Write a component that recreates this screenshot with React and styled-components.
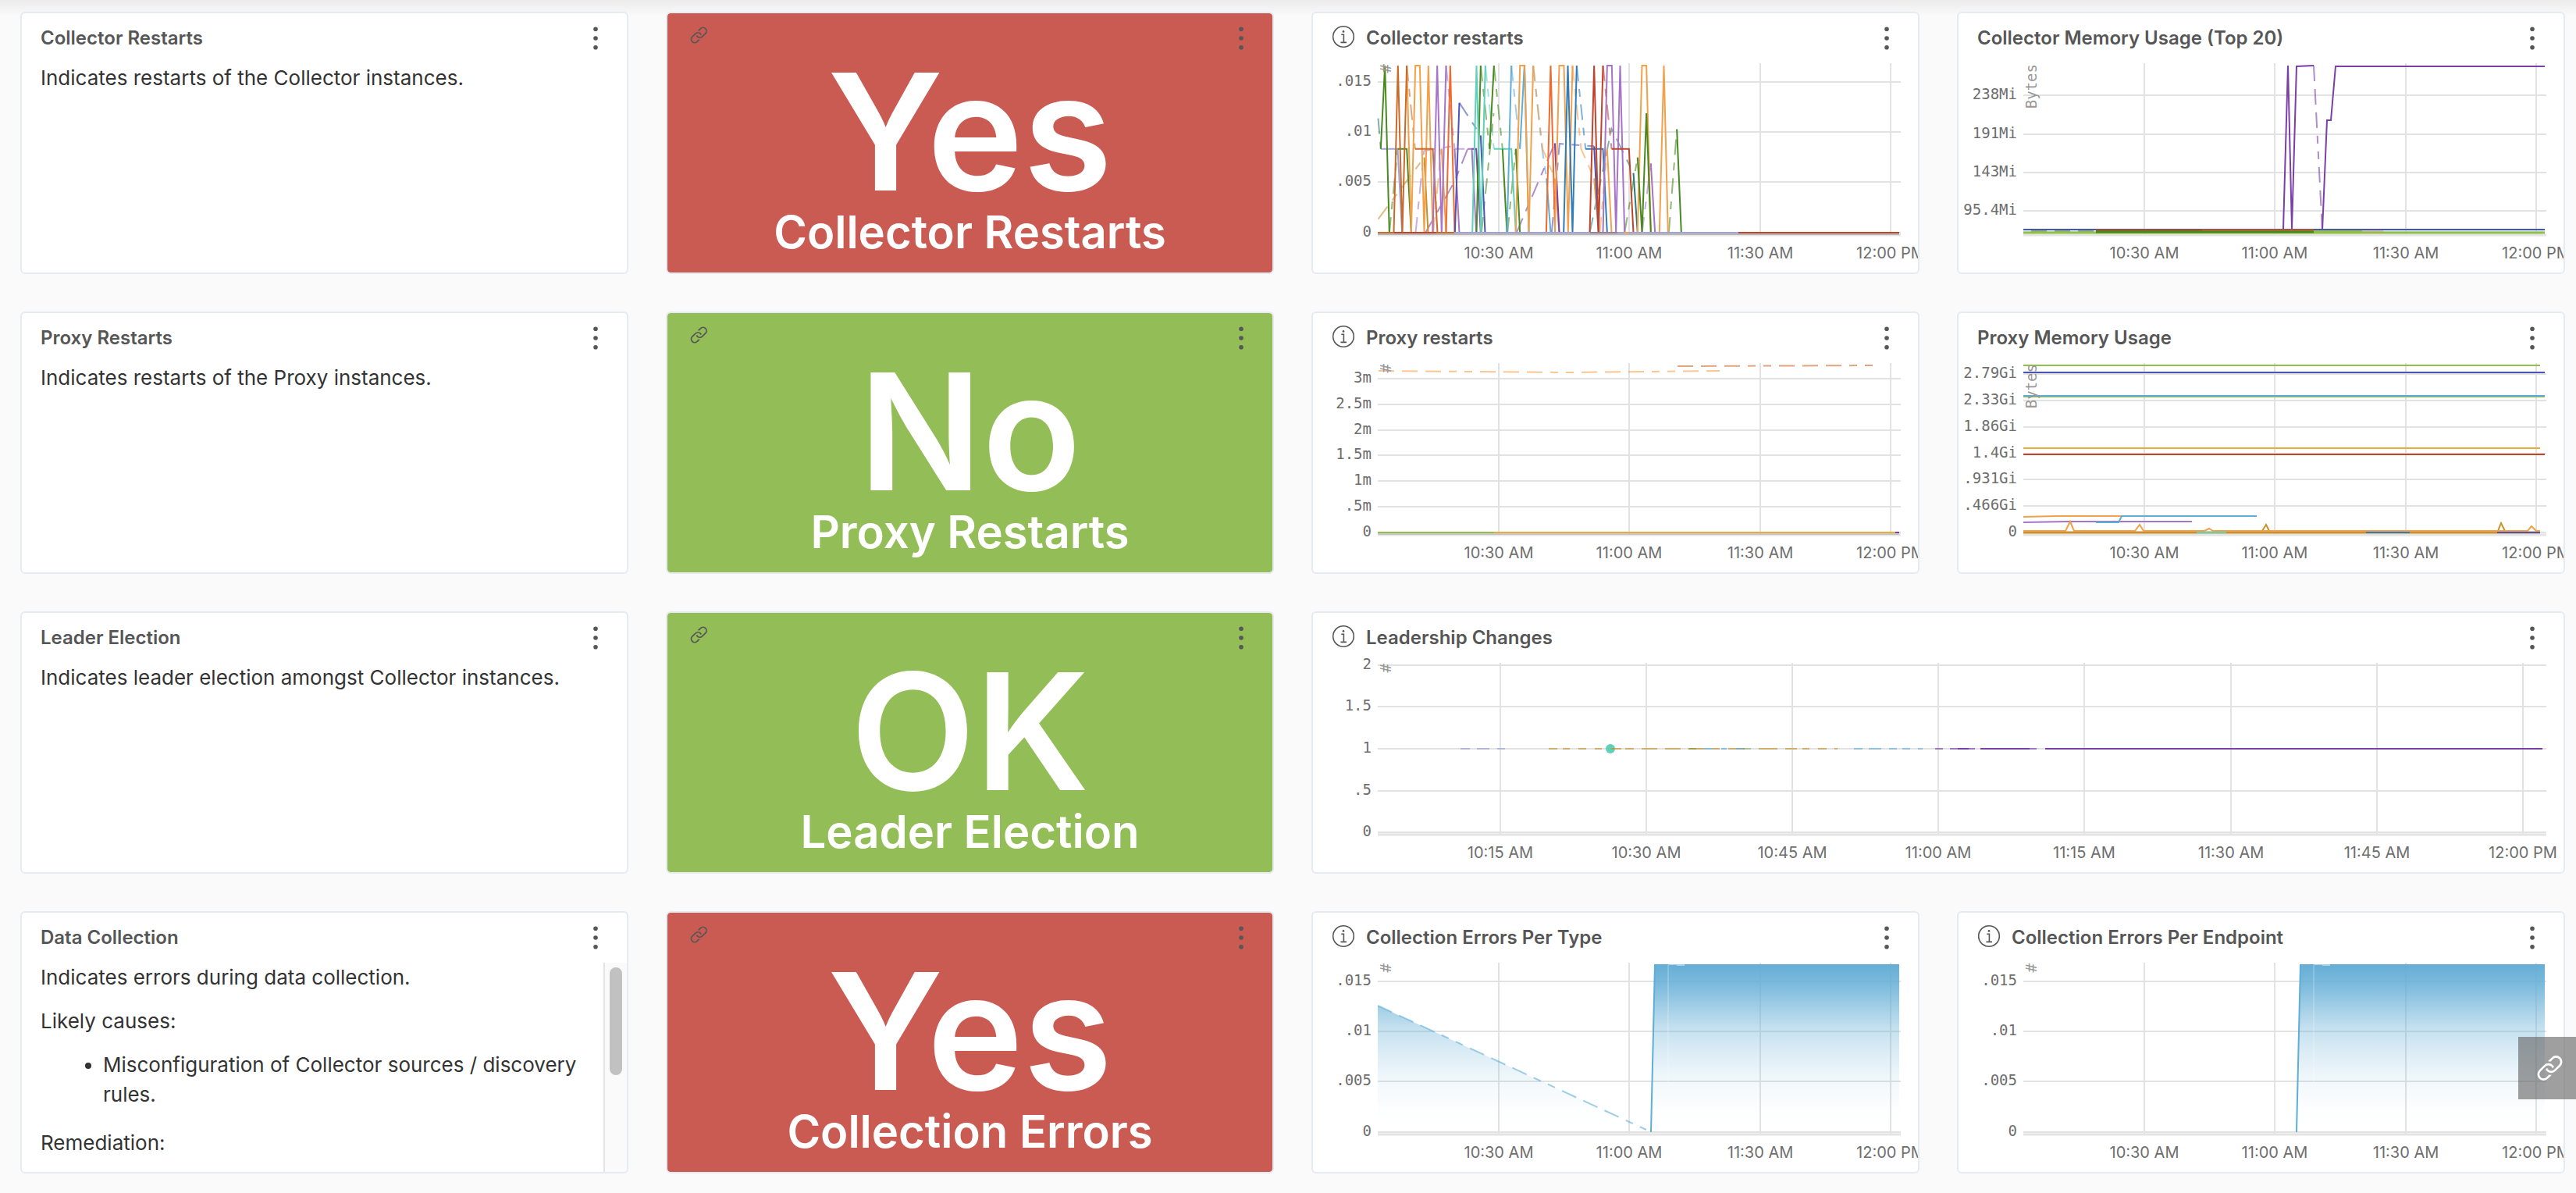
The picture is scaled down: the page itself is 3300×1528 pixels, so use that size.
import React from 'react';
import styled, { createGlobalStyle, css } from 'styled-components';

const GlobalStyle = createGlobalStyle`
  *, *::before, *::after { box-sizing: border-box; }
  body {
    margin: 0;
    background: #fafafa;
    color: #333;
    font-family: Inter, "Open Sans", sans-serif;
  }
`;

const Page = styled.main`
  min-height: 100vh;
  padding: 15px 14px 24px 26px;
  background: linear-gradient(#ebebeb, #fafafa 20px);
`;

const Dashboard = styled.div`
  display: grid;
  grid-template-columns: repeat(4, minmax(0, 1fr));
  grid-auto-rows: 336px;
  gap: 48px;
`;

const tones = { plain: '#fff', bad: '#ca5b53', good: '#93bd56' };

const Card = styled.section`
  display: flex;
  flex-direction: column;
  min-width: 0;
  overflow: hidden;
  grid-column: span ${(p) => p.$span || 1};
  background: ${(p) => tones[p.$tone || 'plain']};
  background-clip: padding-box;
  border: 2px solid #e6eaf1;
  border-radius: 6px;
`;

const Header = styled.header`
  display: flex;
  flex: none;
  align-items: center;
  height: 64px;
  padding: 0 24px;
`;

const Title = styled.h2`
  margin: 0;
  color: #565656;
  font-size: 24px;
  font-weight: 600;
  line-height: 32px;
  white-space: nowrap;
`;

const iconControl = css`
  display: flex;
  align-items: center;
  justify-content: center;
  padding: 0;
  border: 0;
  background: none;
  color: #565656;
  cursor: pointer;
`;

const InfoButton = styled.button`
  ${iconControl}
  align-self: flex-start;
  height: 60px;
  margin-right: 14px;
`;

const CardLink = styled.a`
  ${iconControl}
  align-self: flex-start;
  height: 56px;
`;

const MenuButton = styled.button`
  ${iconControl}
  width: 32px;
  height: 40px;
  margin-left: auto;
`;

const StatusValue = styled.div`
  color: #fff;
  font-size: 208px;
  font-weight: 600;
  line-height: 174px;
  text-align: center;
  white-space: nowrap;
`;

const StatusLabel = styled.div`
  color: #fff;
  font-size: 58px;
  font-weight: 600;
  line-height: 84px;
  text-align: center;
  white-space: nowrap;
`;

const NoteBody = styled.div`
  display: flex;
  flex: 1;
  min-height: 0;
`;

const NoteText = styled.div`
  flex: 1;
  min-width: 0;
  overflow: hidden;
  padding: 0 24px;
  font-size: 26px;
  line-height: 38px;

  p { margin: 0 0 18px; }
  ul { margin: 0 0 24px; padding-left: 80px; }
`;

const ScrollTrack = styled.div`
  flex: none;
  width: 30px;
  padding: 6px;
  background: #fafafa;
  border-left: 2px solid #e3e3e3;
`;

const ScrollThumb = styled.div`
  width: 16px;
  height: 138px;
  border-radius: 8px;
  background: #c1c1c1;
`;

const ChartSvg = styled.svg`
  display: block;
  width: 100%;
  overflow: visible;
`;

const YLabel = styled.text`
  fill: #6e6e6e;
  font-family: "DejaVu Sans Mono", monospace;
  font-size: 19px;
  text-anchor: end;
`;

const XLabel = styled.text`
  fill: #6e6e6e;
  font-size: 20px;
  text-anchor: middle;
`;

const UnitLabel = styled.text`
  fill: #999;
  font-family: "DejaVu Sans Mono", monospace;
  font-size: 19px;
  text-anchor: end;
`;

const ShareLink = styled.a`
  position: fixed;
  right: 0;
  bottom: 120px;
  display: flex;
  align-items: center;
  width: 74px;
  height: 80px;
  padding-left: 16px;
  background: rgba(100, 100, 100, 0.62);
  color: #fff;
`;

const LinkIcon = ({ size }) => (
  <svg width={size} height={size} viewBox="0 0 36 36" fill="currentColor" aria-hidden="true">
    <path d="M17.6,24.32l-2.46,2.44a4,4,0,0,1-5.62,0,3.92,3.92,0,0,1,0-5.55l4.69-4.65a4,4,0,0,1,5.62,0,3.86,3.86,0,0,1,1,1.71A2,2,0,0,0,21.1,18l1.29-1.28a5.89,5.89,0,0,0-1.15-1.62,6,6,0,0,0-8.44,0L8.1,19.79a5.91,5.91,0,0,0,0,8.39,6,6,0,0,0,8.44,0l3.65-3.62c-.17,0-.33,0-.5,0A8,8,0,0,1,17.6,24.32Z" />
    <path d="M28.61,7.82a6,6,0,0,0-8.44,0l-3.65,3.62c.17,0,.33,0,.49,0h0a8,8,0,0,1,2.1.28l2.46-2.44a4,4,0,0,1,5.62,0,3.92,3.92,0,0,1,0,5.55l-4.69,4.65a4,4,0,0,1-5.62,0,3.86,3.86,0,0,1-1-1.71,2,2,0,0,0-.28.23l-1.29,1.28a5.89,5.89,0,0,0,1.15,1.62,6,6,0,0,0,8.44,0l4.69-4.65a5.92,5.92,0,0,0,0-8.39Z" />
  </svg>
);

const InfoIcon = () => (
  <svg width="30" height="30" viewBox="-15 -15 30 30" fill="none" stroke="currentColor" strokeWidth="1.6" aria-hidden="true">
    <circle r="13.3" />
    <circle cy="-6.6" r="1.4" fill="currentColor" stroke="none" />
    <path d="M-2.8 -2.7H0.4V7.4M-3.6 7.4H4" />
  </svg>
);

const DotsIcon = () => (
  <svg width="6" height="30" viewBox="0 0 6 30" fill="currentColor" aria-hidden="true">
    <circle cx="3" cy="3.3" r="2.8" />
    <circle cx="3" cy="15" r="2.8" />
    <circle cx="3" cy="26.7" r="2.8" />
  </svg>
);

const Menu = () => (
  <MenuButton type="button" aria-label="Chart menu"><DotsIcon /></MenuButton>
);

function Note({ title, children, scroll }) {
  return (
    <Card>
      <Header><Title>{title}</Title><Menu /></Header>
      <NoteBody>
        <NoteText>{children}</NoteText>
        {scroll && <ScrollTrack><ScrollThumb /></ScrollTrack>}
      </NoteBody>
    </Card>
  );
}

function Status({ value, label, tone }) {
  return (
    <Card $tone={tone}>
      <Header>
        <CardLink href="#" aria-label={label}><LinkIcon size={32} /></CardLink>
        <Menu />
      </Header>
      <StatusValue>{value}</StatusValue>
      <StatusLabel>{label}</StatusLabel>
    </Card>
  );
}

const HALF_HOURS = [[238, '10:30 AM'], [405, '11:00 AM'], [573, '11:30 AM'], [740, '12:00 PM']];
const QUARTER_HOURS = ['10:15 AM', '10:30 AM', '10:45 AM', '11:00 AM', '11:15 AM', '11:30 AM', '11:45 AM', '12:00 PM']
  .map((t, i) => [Math.round(240 + i * 187.1), t]);
const THOUSANDTHS = [[30, '.015'], [94, '.01'], [158, '.005'], [223, '0']];

const DASH = '20 10 20 10 20 10 10 10 10 10';

const Line = ({ d, c, w = 2, dash, o }) => (
  <path d={d} fill="none" stroke={c} strokeWidth={w} strokeDasharray={dash ? DASH : undefined} opacity={o ?? (dash ? 0.6 : 1)} />
);

function Chart({ title, info, span, y, x = HALF_HOURS, unit, width = 775, children }) {
  const right = width - 22;
  return (
    <Card $span={span}>
      <Header>
        {info && <InfoButton type="button" aria-label="Chart description"><InfoIcon /></InfoButton>}
        <Title>{title}</Title>
        <Menu />
      </Header>
      <ChartSvg viewBox={`0 6 ${width} 268`} role="img" aria-label={title}>
        <g stroke="#e2e2e2" strokeWidth="2">
          {y.map(([py]) => <path key={py} d={`M83 ${py}H${right}`} />)}
          {x.map(([px]) => <path key={px} d={`M${px} 6V226`} />)}
        </g>
        <path d={`M83 226H${right}`} stroke="#e4e4e4" strokeWidth="3" />
        {children}
        {y.map(([py, t]) => <YLabel key={t} x="75" y={py + 5}>{t}</YLabel>)}
        {x.map(([px, t]) => <XLabel key={t} x={px} y="256">{t}</XLabel>)}
        <UnitLabel transform="translate(100 7) rotate(-90)">{unit}</UnitLabel>
      </ChartSvg>
    </Card>
  );
}

const C = {
  green: '#498a20', brown: '#c96a28', orange: '#f3a04a', gold: '#c8912e', lilac: '#a674c8',
  violet: '#7b3fa8', indigo: '#4b53b5', lavender: '#9fa3d8', flame: '#ee6a2f', teal: '#5ed1ba',
  sky: '#5eaed6', blue: '#2f7dba', red: '#c0432c', pine: '#2d7a78', lime: '#92c046', amber: '#e6ad3c',
};

/* [colour, dashed, points] with 849 as zero, 207 as the top of the scale and 527 as the half mark */
const RESTARTS = [
  ['gold', 1, '228,797 405,560'], ['pine', 1, '228,410 238,527'], ['green', 1, '271,849 303,527'],
  ['lilac', 1, '372,849 404,535 522,515'], ['orange', 1, '440,849 470,527'], ['violet', 1, '410,849 523,650 572,527'],
  ['brown', 1, '338,207 370,527'], ['lilac', 1, '489,207 522,527 605,527'], ['indigo', 1, '540,350 622,475'],
  ['teal', 1, '640,207 673,527'], ['green', 1, '622,207 656,527'], ['green', 1, '673,207 706,527'],
  ['green', 1, '625,849 672,390'], ['green', 1, '725,849 757,527'], ['sky', 1, '740,207 773,527'],
  ['sky', 1, '824,207 858,527 875,640'], ['orange', 1, '824,207 860,527 907,640'], ['violet', 1, '760,849 907,505'],
  ['indigo', 1, '895,849 925,507 1058,517'], ['orange', 1, '975,207 1008,527 1058,640'], ['blue', 1, '991,207 1025,527'],
  ['red', 1, '1092,207 1125,527'], ['pine', 1, '1041,849 1125,450 1209,620'], ['orange', 1, '1080,849 1108,527'],
  ['green', 1, '1175,849 1225,560'], ['lilac', 1, '1242,849 1276,583'], ['green', 1, '1345,849 1376,452'],
  ['lavender', 0, '238,527 303,527 320,849'], ['green', 0, '238,527 254,207 271,849'], ['green', 0, '303,527 338,527 355,849'],
  ['gold', 0, '405,560 420,849'],
  ['orange', 0, '338,207 355,849 371,207 388,207 405,849 421,207 438,849'], ['orange', 0, '472,527 489,849'],
  ['brown', 0, '288,849 304,207 321,849 338,207'], ['brown', 0, '370,527 438,527 456,849'],
  ['lilac', 0, '438,849 455,207 472,849 489,207'], ['lilac', 0, '522,527 540,849'], ['lilac', 0, '572,527 588,527 605,849'],
  ['flame', 0, '489,849 505,207 522,849'], ['indigo', 0, '523,849 540,350'], ['indigo', 0, '622,475 639,849'],
  ['violet', 0, '588,527 605,527 622,849'], ['green', 0, '606,849 622,207'], ['teal', 0, '590,849 606,207 623,849 640,207'],
  ['teal', 0, '673,527 740,527 757,849'], ['green', 0, '656,527 673,207'], ['green', 0, '706,527 723,849'],
  ['green', 0, '757,527 773,849'], ['sky', 0, '723,849 740,207'], ['sky', 0, '773,527 790,207 807,849'],
  ['sky', 0, '875,640 891,849'], ['orange', 0, '757,849 773,207 791,207 807,849 824,207'],
  ['orange', 0, '907,640 924,849'], ['violet', 0, '907,505 924,849'], ['flame', 0, '874,849 891,207 908,849'],
  ['orange', 0, '907,849 924,207 942,207 958,849 975,207'], ['orange', 0, '1058,640 1075,849'],
  ['blue', 0, '941,849 957,207 975,849 991,207'], ['blue', 0, '1025,527 1092,527 1108,849'],
  ['indigo', 0, '1058,517 1075,849'], ['orange', 0, '1108,527 1125,849'],
  ['lilac', 0, '1092,849 1108,207 1126,207 1142,849 1158,207 1175,849'],
  ['red', 0, '1041,849 1058,207 1075,849 1092,207'], ['red', 0, '1125,527 1192,527 1209,849'],
  ['pine', 0, '1209,620 1225,849'], ['orange', 0, '1225,849 1242,207 1259,207 1276,849'],
  ['orange', 0, '1309,849 1326,207 1342,849'], ['green', 0, '1225,560 1242,849 1259,390 1276,849'],
  ['lilac', 0, '1276,583 1292,849'], ['green', 0, '1376,452 1393,849'],
];

function RestartLines() {
  return (
    <>
      <g transform="translate(7.5 -60) scale(0.33333)" fill="none" strokeWidth="6">
        {RESTARTS.map(([c, dashed, pts], i) => (
          <polyline key={i} points={pts} stroke={C[c]} strokeDasharray={dashed ? '60 30 30 30' : undefined} opacity={dashed ? 0.6 : 1} />
        ))}
      </g>
      <Line d="M83 225H751" c="#8d8583" w={1} />
      <Line d="M83 223H181" c={C.brown} />
      <Line d="M104 223H158" c={C.red} />
      <Line d="M181 223H545" c={C.lavender} />
      <Line d="M355 223H390" c="#94819a" />
      <Line d="M399 223H405" c={C.orange} />
      <Line d="M545 223H751" c={C.red} />
    </>
  );
}

function ErrorArea({ id, decay }) {
  return (
    <>
      <defs>
        <linearGradient id={id} gradientUnits="userSpaceOnUse" x1="0" y1="8" x2="0" y2="223">
          <stop offset="0" stopColor="#65aed6" />
          <stop offset="0.12" stopColor="#65aed6" stopOpacity="0.85" />
          <stop offset="0.225" stopColor="#65aed6" stopOpacity="0.66" />
          <stop offset="0.38" stopColor="#65aed6" stopOpacity="0.38" />
          <stop offset="0.535" stopColor="#65aed6" stopOpacity="0.22" />
          <stop offset="0.69" stopColor="#65aed6" stopOpacity="0.09" />
          <stop offset="0.88" stopColor="#65aed6" stopOpacity="0.01" />
          <stop offset="1" stopColor="#65aed6" stopOpacity="0" />
        </linearGradient>
      </defs>
      {decay && <path d="M83 61L433 223H83Z" fill={`url(#${id})`} />}
      {decay && <Line d="M83 61L427 220" c={C.sky} dash />}
      <path d="M433 223L438 8H751V223Z" fill={`url(#${id})`} />
      <Line d="M433 223L438 8" c={C.sky} />
      <Line d="M455 9V160" c="#fff" w={1} o={0.4} />
      <Line d="M455 8H466M466 9H476" c="#fff" w={1} o={0.9} />
    </>
  );
}

export default function App() {
  return (
    <Page>
      <GlobalStyle />
      <Dashboard>
        <Note title="Collector Restarts"><p>Indicates restarts of the Collector instances.</p></Note>
        <Status value="Yes" label="Collector Restarts" tone="bad" />
        <Chart title="Collector restarts" info y={THOUSANDTHS} unit="#"><RestartLines /></Chart>
        <Chart title="Collector Memory Usage (Top 20)" y={[[47, '238Mi'], [97, '191Mi'], [146, '143Mi'], [195, '95.4Mi']]} unit="Bytes">
          <Line d="M416 218L422 9L427 218L433 10L455 9M466 220L472 79H477L483 10H751" c={C.violet} />
          <Line d="M455 9L466 220" c={C.violet} dash />
          <Line d="M83 219H751" c={C.indigo} />
          <Line d="M83 221H751" c="#a9dce0" w={1} />
          <Line d="M93 221H176" c={C.green} dash />
          <Line d="M83 223H751" c={C.lime} w={3} />
          <Line d="M176 220H455" c="#a8502b" w={3} />
          <Line d="M312 220H455" c={C.flame} w={1} />
          <Line d="M176 222H455" c={C.green} w={3} />
          <Line d="M455 221H517" c={C.lime} />
          <Line d="M517 221H544" c="#d39a6a" w={1} />
        </Chart>

        <Note title="Proxy Restarts"><p>Indicates restarts of the Proxy instances.</p></Note>
        <Status value="No" label="Proxy Restarts" tone="good" />
        <Chart title="Proxy restarts" info unit="#"
          y={[[26, '3m'], [59, '2.5m'], [92, '2m'], [124, '1.5m'], [157, '1m'], [190, '.5m'], [223, '0']]}>
          <Line d="M84 16L324 18L521 16" c={C.orange} dash />
          <Line d="M467 10L724 9" c={C.brown} dash />
          <Line d="M83 225H751" c="#a9a29c" w={1} />
          <Line d="M83 223H232" c={C.lime} />
          <Line d="M232 223H746" c={C.amber} />
          <Line d="M746 223H751" c={C.violet} />
        </Chart>
        <Chart title="Proxy Memory Usage" unit="Bytes"
          y={[[20, '2.79Gi'], [54, '2.33Gi'], [88, '1.86Gi'], [122, '1.4Gi'], [155, '.931Gi'], [189, '.466Gi'], [223, '0']]}>
          <Line d="M83 9H745" c={C.lime} />
          <Line d="M83 18H751" c={C.indigo} />
          <Line d="M83 49H751" c={C.lime} />
          <Line d="M83 48H751" c={C.sky} />
          <Line d="M83 115H745" c={C.amber} />
          <Line d="M83 123H751" c={C.red} />
          <Line d="M83 203L125 202H232" c={C.orange} />
          <Line d="M83 210L140 209H299" c={C.lilac} />
          <Line d="M176 210H205L209 202H382" c={C.sky} />
          <Line d="M83 223H745" c={C.gold} w={3} />
          <Line d="M389 221L394 213L398 221M691 221L695 211L700 221" c={C.gold} />
          <Line d="M83 221H137L143 209L148 221H226L232 213L237 221H315L321 218L326 221H729L734 215L740 221H745" c={C.orange} />
          <Line d="M305 223H343" c={C.teal} />
          <Line d="M522 223H578" c={C.blue} />
          <Line d="M690 223H745" c={C.indigo} />
        </Chart>

        <Note title="Leader Election"><p>Indicates leader election amongst Collector instances.</p></Note>
        <Status value="OK" label="Leader Election" tone="good" />
        <Chart title="Leadership Changes" info span={2} width={1602} x={QUARTER_HOURS} unit="#"
          y={[[9, '2'], [62, '1.5'], [116, '1'], [170, '.5'], [223, '0']]}>
          <Line d="M189 116H201M210 116H226M236 116H246" c={C.lavender} o={0.7} />
          <circle cx="381" cy="116" r="6" fill={C.teal} />
          <Line d="M302 116H313M320 116H329M340 116H350M361 116H370M381 116H395M400 116H411M421 116H441M451 116H471M481 116H501M511 116H521M532 116H553M571 116H595M605 116H620M627 116H636M647 116H658M668 116H672" c={C.gold} o={0.65} />
          <Line d="M501 116H511M523 116H530M542 116H551" c={C.sky} o={0.7} />
          <Line d="M481 116H491M551 116H561" c={C.green} o={0.35} />
          <Line d="M693 116H704M712 116H728M738 116H748M755 116H765M775 116H781" c={C.sky} o={0.6} />
          <Line d="M797 116H807M816 116H848M918 116H927" c={C.violet} o={0.65} />
          <Line d="M826 116H840M855 116H918M938 116H1575" c={C.violet} />
        </Chart>

        <Note title="Data Collection" scroll>
          <p>Indicates errors during data collection.</p>
          <p>Likely causes:</p>
          <ul><li>Misconfiguration of Collector sources / discovery rules.</li></ul>
          <p>Remediation:</p>
        </Note>
        <Status value="Yes" label="Collection Errors" tone="bad" />
        <Chart title="Collection Errors Per Type" info y={THOUSANDTHS} unit="#"><ErrorArea id="errors-type" decay /></Chart>
        <Chart title="Collection Errors Per Endpoint" info y={THOUSANDTHS} unit="#"><ErrorArea id="errors-endpoint" /></Chart>
      </Dashboard>
      <ShareLink href="#" aria-label="Copy link to dashboard"><LinkIcon size={48} /></ShareLink>
    </Page>
  );
}
